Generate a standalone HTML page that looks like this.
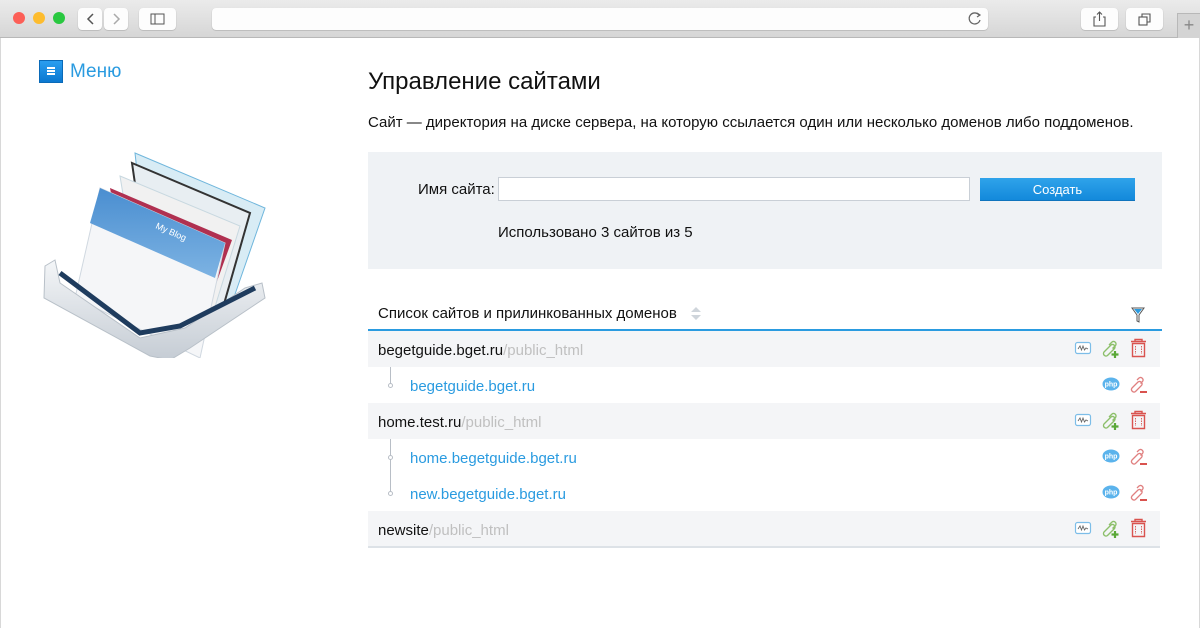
<!DOCTYPE html>
<html><head><meta charset="utf-8"><style>
*{margin:0;padding:0;box-sizing:border-box}
body{width:1200px;height:628px;overflow:hidden;background:#fff;font-family:"Liberation Sans","DejaVu Sans",sans-serif;position:relative}
.chrome{position:absolute;left:0;top:0;width:1200px;height:38px;background:linear-gradient(#ebebeb,#d6d6d6);border-bottom:1px solid #b8b8b8}
.dot{position:absolute;top:12px;width:12px;height:12px;border-radius:50%}
.btn{position:absolute;top:8px;height:22px;background:#fdfdfd;border-radius:4px;box-shadow:0 0.5px 1px rgba(0,0,0,.25)}
.a{position:absolute}
.row{position:absolute;left:368px;width:792px;height:36px;font-size:15px;line-height:40px}
.g{background:#f4f5f7}
.sub{color:#c0c0c0}
.lnk{color:#2a9be0;padding-left:42px}
</style></head><body>
<div class="chrome">
 <div class="dot" style="left:13px;background:#fc5f57"></div>
 <div class="dot" style="left:33px;background:#fdbc2e"></div>
 <div class="dot" style="left:53px;background:#29c840"></div>
 <div class="btn" style="left:78px;width:24px"></div>
 <div class="btn" style="left:104px;width:24px"></div>
 <svg class="a" style="left:78px;top:8px" width="50" height="22"><path d="M15 6l-5 5 5 5" fill="none" stroke="#555" stroke-width="1.5"/><path d="M36 6l5 5-5 5" fill="none" stroke="#aaa" stroke-width="1.5"/></svg>
 <div class="btn" style="left:139px;width:37px"></div>
 <svg class="a" style="left:139px;top:8px" width="37" height="22"><rect x="12" y="6" width="13" height="10" fill="none" stroke="#555"/><line x1="16" y1="6" x2="16" y2="16" stroke="#555"/></svg>
 <div class="btn" style="left:212px;width:776px"></div>
 <svg class="a" style="left:966px;top:10px" width="18" height="18"><path d="M13 5 A5.5 5.5 0 1 0 14 10" fill="none" stroke="#666" stroke-width="1.3"/><path d="M11 3l3 2-3 2" fill="none" stroke="#666" stroke-width="1.2"/></svg>
 <div class="btn" style="left:1081px;width:37px"></div>
 <svg class="a" style="left:1081px;top:8px" width="37" height="22"><path d="M15 9h-2v9h11v-9h-2M18.5 4v9M16 6.5l2.5-2.5 2.5 2.5" fill="none" stroke="#555" stroke-width="1.1"/></svg>
 <div class="btn" style="left:1126px;width:37px"></div>
 <svg class="a" style="left:1126px;top:8px" width="37" height="22"><rect x="13" y="9" width="8" height="8" fill="none" stroke="#555" stroke-width="1.1"/><path d="M16 9V6h8v8h-3" fill="none" stroke="#555" stroke-width="1.1"/></svg>
 <div class="a" style="left:1177px;top:13px;width:23px;height:25px;background:#d4d4d4;border-left:1px solid #b8b8b8;border-top:1px solid #b8b8b8;color:#888;font-size:18px;text-align:center;line-height:22px">+</div>
</div>
<div class="a" style="left:0;top:38px;width:1px;height:590px;background:#d8d8d8"></div>
<div class="a" style="right:0;top:38px;width:1px;height:590px;background:#d8d8d8"></div>

<div class="a" style="left:39px;top:60px;width:24px;height:23px;background:linear-gradient(#2a9ef0,#0b78d0);border:1px solid #0a6ab8"></div>
<div class="a" style="left:47px;top:67px;width:8px;height:8px;border-top:2px solid #fff;border-bottom:2px solid #fff"><div style="margin-top:1px;height:2px;background:#fff"></div></div>
<div class="a" style="left:70px;top:61px;font-size:19px;color:#2a9be0">Меню</div>

<svg class="a" style="left:40px;top:148px" width="230" height="210">
 <defs><linearGradient id="tr" x1="0" y1="0" x2="0" y2="1"><stop offset="0" stop-color="#f4f6f8"/><stop offset="1" stop-color="#c5ccd4"/></linearGradient>
 <linearGradient id="bl" x1="0" y1="0" x2="0" y2="1"><stop offset="0" stop-color="#4a8ed0"/><stop offset="1" stop-color="#7db3e3"/></linearGradient></defs>
 <path d="M115 5 L245 60 L205 175 L130 140Z" fill="#d8ecf5" stroke="#6fb6dc" transform="translate(-20 0)"/>
 <path d="M92 15 L210 65 L180 170 L110 140Z" fill="#e8eef2" stroke="#333" stroke-width="2"/>
 <path d="M80 28 L200 78 L170 175 L100 150Z" fill="#f1f1f1" stroke="#c8d8e0"/>
 <path d="M70 40 L192 92 L160 180 L92 160Z" fill="#b03050"/>
 <path d="M60 40 L185 95 L160 210 L35 150Z" fill="#f5f6f8" stroke="#d0d8e0"/>
 <path d="M60 40 L185 95 L175 130 L50 75Z" fill="url(#bl)"/>
 <text x="115" y="80" font-size="9" fill="#fff" transform="rotate(24 115 80)" font-family="Liberation Sans">My Blog</text>
 <path d="M5 118 L15 112 L20 135 L100 190 L145 180 L205 140 L222 135 L225 150 L150 200 L130 212 L110 208 L4 150Z" fill="url(#tr)" stroke="#b8c0c8"/>
 <path d="M20 125 L100 185 L140 178 L215 140" fill="none" stroke="#1f3c5e" stroke-width="5"/>
</svg>

<div class="a" style="left:368px;top:68px;font-size:24px;color:#111">Управление сайтами</div>
<div class="a" style="left:368px;top:114px;font-size:15px;color:#111">Сайт — директория на диске сервера, на которую ссылается один или несколько доменов либо поддоменов.</div>

<div class="a" style="left:368px;top:152px;width:794px;height:117px;background:#eff2f5"></div>
<div class="a" style="left:418px;top:181px;font-size:15px;color:#111">Имя сайта:</div>
<div class="a" style="left:498px;top:177px;width:472px;height:24px;background:#fff;border:1px solid #c9cfd6"></div>
<div class="a" style="left:980px;top:178px;width:155px;height:23px;background:linear-gradient(#2fa3ea,#1389db);border-bottom:1px solid #0f74bd;color:#fff;font-size:13px;text-align:center;line-height:23px">Создать</div>
<div class="a" style="left:498px;top:224px;font-size:15px;color:#111">Использовано 3 сайтов из 5</div>

<div class="a" style="left:378px;top:305px;font-size:15px;color:#111">Список сайтов и прилинкованных доменов</div>
<svg class="a" style="left:690px;top:306px" width="12" height="16"><path d="M1 6l5-5 5 5z M1 9l5 5 5-5z" fill="#cfd5db"/></svg>
<svg class="a" style="left:1130px;top:306px" width="16" height="18"><path d="M2 2h12l-5 7v7l-2 -1v-6z" fill="none" stroke="#555"/><path d="M4 3h8l-4 5z" fill="#2a9be0"/></svg>
<div class="a" style="left:368px;top:329px;width:794px;height:2px;background:#2a9be0"></div>

<div class="row g" style="top:331px"><span style="padding-left:10px;color:#111">begetguide.bget.ru</span><span class="sub">/public_html</span></div>
<div class="row" style="top:367px"><span class="lnk">begetguide.bget.ru</span></div>
<div class="row g" style="top:403px"><span style="padding-left:10px;color:#111">home.test.ru</span><span class="sub">/public_html</span></div>
<div class="row" style="top:439px"><span class="lnk">home.begetguide.bget.ru</span></div>
<div class="row" style="top:475px"><span class="lnk">new.begetguide.bget.ru</span></div>
<div class="row g" style="top:511px"><span style="padding-left:10px;color:#111">newsite</span><span class="sub">/public_html</span></div>
<div class="a" style="left:368px;top:546px;width:792px;height:2px;background:#dde2e7"></div>

<div class="a" style="left:390px;top:367px;width:1px;height:17px;background:#b8bec6"></div>
<div class="a" style="left:388px;top:383px;width:5px;height:5px;border:1px solid #b8bec6;border-radius:50%;background:#fff"></div>
<div class="a" style="left:390px;top:439px;width:1px;height:53px;background:#b8bec6"></div>
<div class="a" style="left:388px;top:455px;width:5px;height:5px;border:1px solid #b8bec6;border-radius:50%;background:#fff"></div>
<div class="a" style="left:388px;top:491px;width:5px;height:5px;border:1px solid #b8bec6;border-radius:50%;background:#fff"></div>

<svg class="a" style="left:1070px;top:331px" width="80" height="220">
 <defs>
 <g id="act">
  <rect x="5.5" y="11.5" width="15" height="11" rx="2" fill="#fff" stroke="#7cbde8" stroke-width="1.2"/>
  <path d="M8 18l2-3 1.5 4 1.5-4 1.5 4 1.5-2 2 1" fill="none" stroke="#666" stroke-width="0.9"/>
  <path d="M34 21l7-7a2.5 2.5 0 0 1 3.5 3.5l-7 7a2.5 2.5 0 0 1-3.5-3.5z M39 14l3-3a2.5 2.5 0 0 1 3.5 3.5l-3 3" fill="none" stroke="#8cbf6a" stroke-width="1.4"/>
  <path d="M45 20v7M41.5 23.5h7" stroke="#5aa838" stroke-width="2.2"/>
  <path d="M61 10.5h15M65 10v-1.5h7v1.5M62.5 12.5h12v13h-12z" fill="none" stroke="#d9534f" stroke-width="1.4"/>
  <path d="M65.5 15v8M71.5 15v8" stroke="#d9534f" stroke-width="0.9" stroke-dasharray="1.5 1"/>
 </g>
 <g id="sub">
  <ellipse cx="41" cy="17" rx="8.5" ry="6.5" fill="#5bb3ec"/>
  <text x="41" y="19.5" font-size="7" fill="#fff" text-anchor="middle" font-family="Liberation Sans" font-weight="bold">php</text>
  <path d="M62 21l6-6a2.5 2.5 0 0 1 3.5 3.5l-6 6a2.5 2.5 0 0 1-3.5-3.5z M67 13l2-2a2.5 2.5 0 0 1 3.5 3.5l-2 2" fill="none" stroke="#e08080" stroke-width="1.3"/>
  <path d="M70 25h7" stroke="#d9534f" stroke-width="2"/>
 </g></defs>
 <use href="#act" y="0"/>
 <use href="#sub" y="36"/>
 <use href="#act" y="72"/>
 <use href="#sub" y="108"/>
 <use href="#sub" y="144"/>
 <use href="#act" y="180"/>
</svg>
</body></html>
